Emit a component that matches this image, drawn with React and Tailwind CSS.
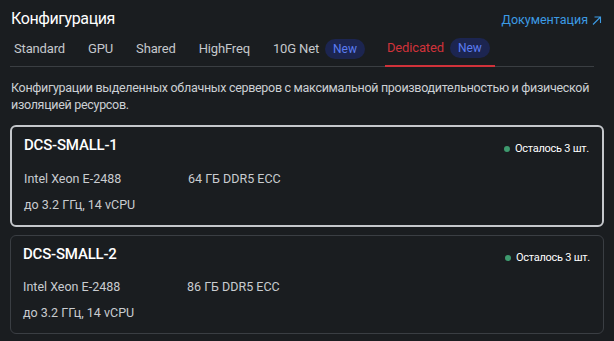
import React from "react";

const tabs = [
  { name: "Standard" },
  { name: "GPU" },
  { name: "Shared" },
  { name: "HighFreq" },
  { name: "10G Net", badge: true },
  { name: "Dedicated", badge: true, active: true },
];

const servers = [
  { id: "DCS-SMALL-1", cpu: "Intel Xeon E-2488", ram: "64 ГБ DDR5 ECC", freq: "до 3.2 ГГц, 14 vCPU", left: 3, selected: true },
  { id: "DCS-SMALL-2", cpu: "Intel Xeon E-2488", ram: "86 ГБ DDR5 ECC", freq: "до 3.2 ГГц, 14 vCPU", left: 3 },
];

const NewBadge = () => (
  <span className="ml-[6px] rounded-full bg-[#1c2550] px-[8px] py-[2px] text-[12px] leading-[16px] tracking-normal text-[#5b7cf0]">
    New
  </span>
);

const ServerCard = ({ s }) => (
  <div
    className={`rounded-[6px] border px-[12px] pt-[8px] pb-[12px] ${
      s.selected ? "border-2 border-[#c4c7cb] px-[11px] pt-[7px] pb-[11px]" : "border-[#3a3e43]"
    }`}
  >
    <div className="flex items-start justify-between">
      <div className="text-[15px] font-medium leading-[20px] tracking-[-0.2px] text-white">{s.id}</div>
      <div className="mt-[6px] flex items-center gap-[5px] pr-[1px] text-[11px] tracking-[-0.25px] text-white">
        <span className="h-[6px] w-[6px] rounded-full bg-[#3e9a6e]" />
        Осталось {s.left} шт.
      </div>
    </div>
    <div className="mt-[13px] grid grid-cols-[164px_1fr] text-[12.5px] leading-[16px] text-[#c9ccd0]">
      <span>{s.cpu}</span>
      <span>{s.ram}</span>
    </div>
    <div className="mt-[10px] text-[12.5px] leading-[16px] text-[#c9ccd0]">{s.freq}</div>
  </div>
);

export default function App() {
  return (
    <div
      className="min-h-[341px] w-[614px] bg-[#1a1d20] px-[10px] pt-[8px]"
      style={{ fontFamily: "Roboto, 'Noto Sans', sans-serif" }}
    >
      <div className="flex items-center justify-between pl-[1px] pr-[2px]">
        <h1 className="text-[16px] font-normal leading-[22px] tracking-[-0.4px] text-white">Конфигурация</h1>
        <a className="mt-[2px] flex items-center gap-[3px] text-[12.5px] text-[#3c9be4]">
          Документация
          <svg width="11" height="11" viewBox="0 0 11 11" fill="none" stroke="currentColor" strokeWidth="1.1">
            <path d="M2 9.5 L9.5 2 M3.5 2 H9.5 V8" />
          </svg>
        </a>
      </div>

      <div className="mt-[3px] mr-[10px] flex border-b border-[#3a3e42] pl-[1px]">
        {tabs.map((t) => (
          <div
            key={t.name}
            className={`mr-[17px] flex items-center px-[3px] pb-[7px] pt-[5px] text-[13px] tracking-[-0.15px] ${
              t.active ? "-mb-px border-b-2 border-[#d0323a] pl-[2px] pr-[5px] text-[#d0323a]" : "text-[#c5c8cc]"
            }`}
          >
            {t.name}
            {t.badge && <NewBadge />}
          </div>
        ))}
      </div>

      <p className="mt-[12px] pl-[1px] text-[12.5px] leading-[17px] tracking-[-0.3px] text-[#ccd0d4]">
        Конфигурации выделенных облачных серверов с максимальной производительностью и физической изоляцией ресурсов.
      </p>

      <div className="mt-[12px] flex w-[594px] flex-col gap-[8px]">
        {servers.map((s) => (
          <ServerCard key={s.id} s={s} />
        ))}
      </div>
    </div>
  );
}
